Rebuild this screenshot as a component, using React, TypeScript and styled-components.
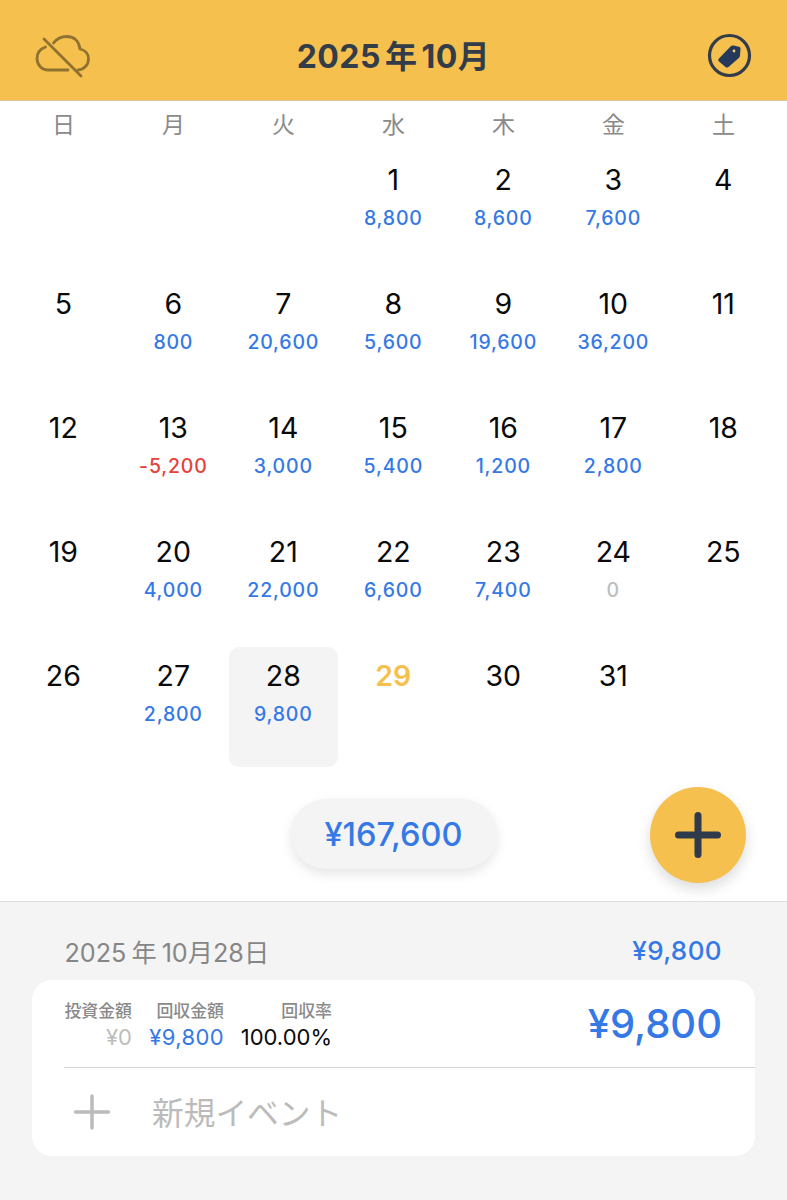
import React from "react";
import styled, { createGlobalStyle } from "styled-components";

const Global = createGlobalStyle`
  html, body { margin: 0; padding: 0; background: #fff; }
  body { font-family: Inter, "Noto Sans CJK JP", sans-serif; }
  * { box-sizing: border-box; }
`;
const Page = styled.div`
  width: 787px; height: 1200px; display: flex; flex-direction: column; overflow: hidden; background: #fff;
`;
const Header = styled.header`
  height: 101px; flex: none; background: #f5c04e; border-bottom: 1px solid #d9c79a;
  display: grid; grid-template-columns: 1fr auto 1fr; align-items: center; padding: 13px 34px 0 34px;
`;
const CloudSlot = styled.div`
  display: flex; justify-content: flex-start;
`;
const TagSlot = styled.div`
  display: flex; justify-content: flex-end; margin-top: -2px;
`;
const Title = styled.h1`
  margin: 0; font-size: 32px; font-weight: 700; color: #333c49; letter-spacing: 0.5px; line-height: 1;
`;
const YearMark = styled.span<{ $gap: number }>`
  margin: 0 ${(p) => p.$gap}px;
`;
const Weekdays = styled.div`
  height: 50px; flex: none; display: grid; grid-template-columns: repeat(7, 110px); padding: 0 0 0 8.5px;
`;
const Weekday = styled.div`
  display: flex; justify-content: center; padding-top: 9px; font-size: 23px; line-height: 30px; color: #8a8a8a;
`;
const Grid = styled.div`
  display: grid; grid-template-columns: repeat(7, 110px); grid-auto-rows: 124px; padding: 0 0 0 8.5px; flex: none;
`;
const Cell = styled.div<{ $selected?: boolean }>`
  height: 120px; margin-right: 0.4px; display: flex; flex-direction: column; align-items: center; border-radius: 10px;
  background: ${(p) => (p.$selected ? "#f4f4f4" : "transparent")};
`;
const DayNum = styled.div<{ $today?: boolean }>`
  margin-top: 12px; height: 34px; font-size: 28.500px; line-height: 34px;
  font-weight: ${(p) => (p.$today ? 600 : 400)}; color: ${(p) => (p.$today ? "#f5c04e" : "#0a0a0a")};
`;
const Amount = styled.div<{ $tone: "pos" | "neg" | "zero" }>`
  margin-top: 10px; font-size: 19.500px; line-height: 22px; letter-spacing: 0.8px; font-weight: 500;
  color: ${(p) => (p.$tone === "pos" ? "#3579e6" : p.$tone === "neg" ? "#e6413a" : "#bdbdbd")};
`;
const TotalRow = styled.div`
  flex: none; height: 130px; display: grid; grid-template-columns: 1fr auto 1fr; align-items: center; padding: 0 41px 6px;
`;
const TotalPill = styled.div`
  grid-column: 2; width: 206px; height: 70px; border-radius: 35px; background: #f4f4f4;
  box-shadow: 0 5px 12px rgba(0,0,0,0.1); display: flex; align-items: center; justify-content: center;
  font-size: 32.500px; font-weight: 500; color: #3579e6; margin-top: 2px;
`;
const Fab = styled.button`
  grid-column: 3; justify-self: end; width: 96px; height: 96px; border: 0; border-radius: 50%; padding: 0; margin-top: 4px;
  background: #f5c04e; box-shadow: 0 6px 14px rgba(0,0,0,0.14); display: flex; align-items: center; justify-content: center;
`;
const Footer = styled.footer`
  flex: 1; background: #f4f4f4; border-top: 1px solid #dedede; padding: 0 32px;
`;
const DateRow = styled.div`
  height: 78px; display: flex; align-items: center; justify-content: space-between; padding: 19px 33px 0 32.5px;
`;
const DateText = styled.div`
  font-size: 25.200px; color: #868686;
`;
const DateAmount = styled.div`
  font-size: 26px; color: #3579e6; font-weight: 500; letter-spacing: 0.4px;
`;
const Card = styled.section`
  background: #fff; border-radius: 20px; height: 176px; display: flex; flex-direction: column;
`;
const StatsRow = styled.div`
  height: 88px; margin-left: 32px; border-bottom: 1px solid #d6d6d6; display: flex; align-items: center; justify-content: space-between; padding: 4px 33px 0 0;
`;
const Stats = styled.div`
  display: grid; grid-template-columns: 68px 92px 108px; text-align: right;
`;
const StatLabel = styled.div`
  font-size: 16.900px; line-height: 22px; font-weight: 500; color: #8a8a8a;
`;
const StatValue = styled.div<{ $color: string }>`
  font-size: 22px; line-height: 30px; letter-spacing: ${(p) => (p.$color === "#3579e6" ? "0.4px" : "0")}; color: ${(p) => p.$color};
`;
const BigAmount = styled.div`
  font-size: 40px; font-weight: 500; color: #3579e6; margin-top: -4px;
`;
const AddRow = styled.div`
  flex: 1; display: flex; align-items: center; gap: 42px; padding-left: 42px;
`;
const AddLabel = styled.div`
  font-size: 31.700px; color: #bbbbbb; margin-top: -2px;
`;

const weekdays = ["日", "月", "火", "水", "木", "金", "土"];
type D = { d: number; a?: number };
const cells: (D | null)[] = [
  null, null, null, { d: 1, a: 8800 }, { d: 2, a: 8600 }, { d: 3, a: 7600 }, { d: 4 },
  { d: 5 }, { d: 6, a: 800 }, { d: 7, a: 20600 }, { d: 8, a: 5600 }, { d: 9, a: 19600 }, { d: 10, a: 36200 }, { d: 11 },
  { d: 12 }, { d: 13, a: -5200 }, { d: 14, a: 3000 }, { d: 15, a: 5400 }, { d: 16, a: 1200 }, { d: 17, a: 2800 }, { d: 18 },
  { d: 19 }, { d: 20, a: 4000 }, { d: 21, a: 22000 }, { d: 22, a: 6600 }, { d: 23, a: 7400 }, { d: 24, a: 0 }, { d: 25 },
  { d: 26 }, { d: 27, a: 2800 }, { d: 28, a: 9800 }, { d: 29 }, { d: 30 }, { d: 31 }, null,
];
const tone = (a: number) => (a > 0 ? "pos" : a < 0 ? "neg" : "zero") as "pos" | "neg" | "zero";

export default function App() {
  return (
    <Page>
      <Global />
      <Header>
        <CloudSlot>
          <svg width="58" height="48" viewBox="0 0 58 48" fill="none" stroke="#8f7230" strokeWidth="2.800" strokeLinecap="round" strokeLinejoin="round">
            <path d="M11.500 14 C6 16 3 20.500 3 25.500 C3 32 8 37 14 37 H34" />
            <path d="M44 37 C50 36.500 54.500 32 54.500 26 C54.500 21 51 17 46 16 C45 8 40 3.500 33 3.500 C27 3.500 22.500 6 19.500 10" />
            <path d="M10 6 L47 43" />
          </svg>
        </CloudSlot>
        <Title>2025<YearMark $gap={4}>年</YearMark>10月</Title>
        <TagSlot>
          <svg width="46" height="46" viewBox="0 0 46 46" fill="none">
            <circle cx="22.500" cy="22.500" r="20" stroke="#333c49" strokeWidth="3.200" />
            <path d="M12 25.500 L23.500 13.500 C24.500 12.500 25.500 12.300 26.500 12.500 L32 13.800 C33 14 33.500 14.800 33.500 15.800 L33 22.500 C33 23.500 32.500 24.300 31.800 25 L21.500 34 C20.500 34.800 19.500 34.800 18.500 34 L12 28.500 C11 27.500 11 26.500 12 25.500 Z" fill="#24395c" />
            <circle cx="27" cy="18" r="1.400" fill="#f5d36a" />
          </svg>
        </TagSlot>
      </Header>
      <Weekdays>
        {weekdays.map((w) => <Weekday key={w}>{w}</Weekday>)}
      </Weekdays>
      <Grid>
        {cells.map((c, i) =>
          c ? (
            <Cell key={i} $selected={c.d === 28}>
              <DayNum $today={c.d === 29}>{c.d}</DayNum>
              {c.a !== undefined && <Amount $tone={tone(c.a)}>{c.a.toLocaleString("en-US")}</Amount>}
            </Cell>
          ) : <Cell key={i} />
        )}
      </Grid>
      <TotalRow>
        <TotalPill>¥167,600</TotalPill>
        <Fab aria-label="add">
          <svg width="46" height="46" viewBox="0 0 46 46" fill="none" stroke="#2f3a4a" strokeWidth="7" strokeLinecap="round">
            <path d="M23 3.500 V42.500 M3.500 23 H42.500" />
          </svg>
        </Fab>
      </TotalRow>
      <Footer>
        <DateRow>
          <DateText>2025<YearMark $gap={5}>年</YearMark>10月28日</DateText>
          <DateAmount>¥9,800</DateAmount>
        </DateRow>
        <Card>
          <StatsRow>
            <Stats>
              <StatLabel>投資金額</StatLabel>
              <StatLabel>回収金額</StatLabel>
              <StatLabel>回収率</StatLabel>
              <StatValue $color="#bdbdbd">¥0</StatValue>
              <StatValue $color="#3579e6">¥9,800</StatValue>
              <StatValue $color="#0a0a0a">100.00%</StatValue>
            </Stats>
            <BigAmount>¥9,800</BigAmount>
          </StatsRow>
          <AddRow>
            <svg width="36" height="36" viewBox="0 0 36 36" fill="none" stroke="#bbbbbb" strokeWidth="3.500" strokeLinecap="round">
              <path d="M18 2 V34 M1.500 18 H34.500" />
            </svg>
            <AddLabel>新規イベント</AddLabel>
          </AddRow>
        </Card>
      </Footer>
    </Page>
  );
}
